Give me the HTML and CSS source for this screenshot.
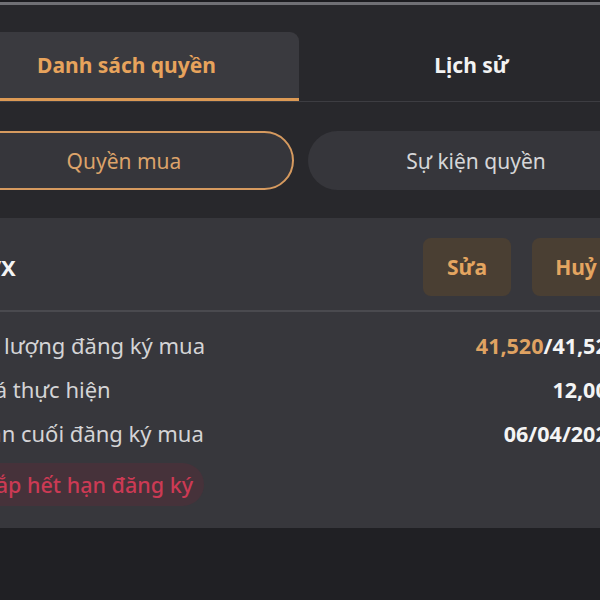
FILE: index.html
```html
<!DOCTYPE html>
<html lang="vi">
  <head>
    <meta charset="UTF-8" />
    <meta name="viewport" content="width=device-width, initial-scale=1.0" />
    <title>Quyền mua</title>
    <link rel="stylesheet" href="styles.css">
  </head>
  <body>
    <div class="screen">
      <div class="topline"></div>
      <div class="tabs">
        <div class="tab active">Danh sách quyền</div>
        <div class="tab">Lịch sử</div>
      </div>

      <div class="seg">
        <div class="seg-item on">Quyền mua</div>
        <div class="seg-item">Sự kiện quyền</div>
      </div>

      <div class="card">
        <div class="card-head">
          <span class="ticker">PVX</span>
          <div class="actions">
            <button class="act">Sửa</button>
            <button class="act">Huỷ</button>
          </div>
        </div>
        <div class="rows">
          <div class="row">
            <span class="lbl">Số lượng đăng ký mua</span>
            <span class="val"><span class="hl">41,520</span>/41,520</span>
          </div>
          <div class="row">
            <span class="lbl">Giá thực hiện</span>
            <span class="val">12,000</span>
          </div>
          <div class="row">
            <span class="lbl">Hạn cuối đăng ký mua</span>
            <span class="val">06/04/2024</span>
          </div>
          <div class="badge">Sắp hết hạn đăng ký</div>
        </div>
      </div>
    </div>
  </body>
</html>
```

FILE: styles.css
```css
* {
  padding: 0;
  margin: 0;
  box-sizing: border-box;
}
html,
body {
  height: 100%;
}
body {
  background: #202024;
  font-family: "Noto Sans", "Open Sans", sans-serif;
  overflow: hidden;
}
.screen {
  width: 690px;
  margin-left: -46px;
}
.topline {
  height: 5px;
  border-top: 2px solid #1c1c20;
  background: #707075;
}

.tabs {
  display: flex;
  padding-top: 27px;
  background: #28282c;
  border-bottom: 1px solid #3d3d42;
}
.tab {
  flex: 1;
  height: 69px;
  display: flex;
  align-items: center;
  justify-content: center;
  font-size: 21px;
  font-weight: 700;
  color: #f2f2f2;
  border-bottom: 3px solid transparent;
}
.tab.active {
  background: #3a3a3f;
  color: #e7a35c;
  border-radius: 0 9px 0 0;
  border-bottom-color: #dc9a55;
}

.seg {
  display: flex;
  gap: 14px;
  padding: 29px 0 28px;
  background: #28282c;
}
.seg-item {
  flex: 1;
  height: 59px;
  border-radius: 30px;
  background: #36363b;
  display: flex;
  align-items: center;
  justify-content: center;
  font-size: 21px;
  color: #d6d6d8;
}
.seg-item.on {
  border: 2px solid #d69a5f;
  color: #dca36a;
}

.card {
  background: #37373c;
  padding: 0 24px 22px 19px;
}
.card-head {
  display: flex;
  align-items: center;
  justify-content: space-between;
  height: 94px;
  padding-top: 6px;
  border-bottom: 2px solid #4a4a4f;
}
.ticker {
  font-size: 22px;
  font-weight: 700;
  color: #f4f4f4;
}
.actions {
  display: flex;
  gap: 21px;
}
.act {
  width: 88px;
  height: 58px;
  border: none;
  border-radius: 8px;
  background: #4a3f33;
  color: #e4a560;
  font-family: inherit;
  font-size: 21px;
  font-weight: 700;
}

.rows {
  padding-top: 11px;
}
.row {
  display: flex;
  justify-content: space-between;
  align-items: center;
  height: 44px;
}
.lbl {
  font-size: 22px;
  color: #d4d4d6;
}
.val {
  font-size: 21.5px;
  font-weight: 700;
  color: #f4f4f4;
}
.hl {
  color: #dfa262;
}
.badge {
  display: inline-block;
  margin-top: 8px;
  margin-left: 0;
  padding: 0 11px;
  height: 43px;
  line-height: 43px;
  border-radius: 22px;
  background: #46323a;
  color: #cc3a54;
  font-size: 21.5px;
  font-weight: 500;
}
```
